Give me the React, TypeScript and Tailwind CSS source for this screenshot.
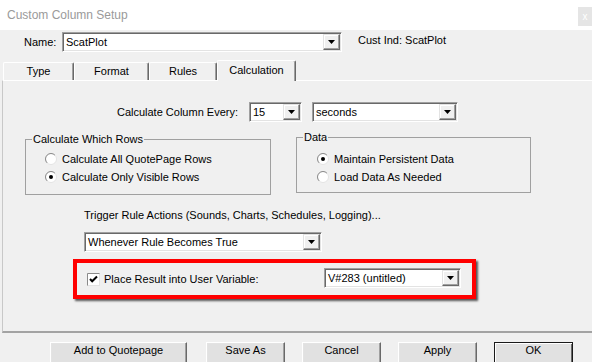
import React from 'react';

const Arrow = () => (
  <svg width="7" height="4" viewBox="0 0 7 4">
    <polygon points="0,0 7,0 3.5,4" fill="#000" />
  </svg>
);

const Combo = ({ value, className }: { value: string; className: string }) => (
  <div
    className={`flex h-[20px] items-stretch bg-white border border-t-[#a0a0a0] border-l-[#a0a0a0] border-r-white border-b-white shadow-[inset_1px_1px_0_#696969,inset_-1px_-1px_0_#e3e3e3] p-[1px] ${className}`}
  >
    <span className="flex-1 pl-[2px] leading-[16px] overflow-hidden whitespace-nowrap">{value}</span>
    <div className="w-[17px] flex items-center justify-center bg-[#f0f0f0] border border-t-[#e3e3e3] border-l-[#e3e3e3] border-r-[#696969] border-b-[#696969] shadow-[inset_-1px_-1px_0_#a0a0a0,inset_1px_1px_0_#fff]">
      <Arrow />
    </div>
  </div>
);

const Radio = ({ checked }: { checked?: boolean }) => (
  <svg width="12" height="12" viewBox="0 0 12 12" className="shrink-0">
    <circle cx="6" cy="6" r="5.5" fill="#fff" stroke="#e3e3e3" />
    <path d="M2.11 9.89 A5.5 5.5 0 0 1 9.89 2.11" fill="none" stroke="#8a8a8a" />
    {checked && <circle cx="6" cy="6" r="2" fill="#000" />}
  </svg>
);

const RadioRow = ({ label, checked, pad }: { label: string; checked?: boolean; pad: string }) => (
  <div className={`flex h-[18px] items-center gap-[5px] ${pad}`}>
    <Radio checked={checked} />
    <span>{label}</span>
  </div>
);

const Tab = ({ label, w, active }: { label: string; w: string; active?: boolean }) => (
  <div
    className={`${w} ${
      active ? 'h-[21px] -mb-[1px] pb-[2px] bg-[#f0f0f0] relative z-10' : 'h-[18px]'
    } flex items-center justify-center border-t border-l border-r border-t-white border-l-white border-r-[#696969] shadow-[inset_-1px_0_0_#a0a0a0] rounded-t-[2px]`}
  >
    {label}
  </div>
);

const Button = ({ label, w, isDefault }: { label: string; w: string; isDefault?: boolean }) => (
  <div
    className={`${w} h-[23px] flex justify-center pt-[1px] leading-[13px] bg-[#e1e1e1] border ${
      isDefault
        ? 'border-[#1a1a1a] shadow-[inset_1px_1px_0_#fff,inset_-1px_-1px_0_#696969]'
        : 'border-t-white border-l-white border-r-[#696969] border-b-[#696969] shadow-[inset_-1px_-1px_0_#a0a0a0,inset_1px_1px_0_#e3e3e3]'
    }`}
  >
    {label}
  </div>
);

export default function App() {
  return (
    <div className="w-[592px] h-[362px] overflow-hidden bg-[#f0f0f0] flex flex-col text-[11px] leading-[13px] text-black font-['Liberation_Sans',Arial,sans-serif]">
      {/* title bar */}
      <div className="h-[30px] shrink-0 bg-white flex justify-between">
        <span className="pl-[7px] pt-[8px] text-[12px] leading-[14px] text-[#9a9a9a]">Custom Column Setup</span>
        <div className="mt-[7px] w-[14px] h-[19px] bg-[#e5e5e5] flex items-center justify-center text-[10px] text-white">x</div>
      </div>

      {/* name row */}
      <div className="h-[30px] shrink-0 flex items-start pt-[2px]">
        <div className="w-[62px] h-[20px] flex items-center pl-[24px]">Name:</div>
        <Combo value="ScatPlot" className="w-[280px]" />
        <div className="h-[20px] flex items-center ml-[16px] -mt-[2px]">Cust Ind: ScatPlot</div>
      </div>

      {/* tabs */}
      <div className="h-[20px] shrink-0 flex items-end pl-[3px]">
        <Tab label="Type" w="w-[71px]" />
        <Tab label="Format" w="w-[75px]" />
        <Tab label="Rules" w="w-[68px]" />
        <Tab label="Calculation" w="w-[79px]" active />
      </div>

      {/* panel */}
      <div className="h-[253px] shrink-0 ml-[2px] w-[600px] border-t border-l border-t-white border-l-[#c8c8c8] border-b-2 border-b-[#a3a3a3] flex flex-col">
        <div className="mt-[21px] h-[20px] flex items-center">
          <div className="w-[235px] text-right">Calculate Column Every:</div>
          <Combo value="15" className="ml-[11px] w-[53px]" />
          <Combo value="seconds" className="ml-[10px] w-[146px]" />
        </div>

        <div className="mt-[15px] flex items-start">
          <div className="mt-[2px] ml-[22px] w-[246px] h-[56px] border border-[#a0a0a0] flex flex-col">
            <span className="-mt-[7px] ml-[6px] px-[1px] self-start bg-[#f0f0f0]">Calculate Which Rows</span>
            <div className="mt-[4px]">
              <RadioRow label="Calculate All QuotePage Rows" pad="pl-[19px]" />
              <RadioRow label="Calculate Only Visible Rows" pad="pl-[19px]" checked />
            </div>
          </div>
          <div className="ml-[25px] w-[235px] h-[56px] border border-[#a0a0a0] flex flex-col">
            <span className="-mt-[7px] ml-[6px] px-[1px] self-start bg-[#f0f0f0]">Data</span>
            <div className="mt-[6px]">
              <RadioRow label="Maintain Persistent Data" pad="pl-[20px]" checked />
              <RadioRow label="Load Data As Needed" pad="pl-[20px]" />
            </div>
          </div>
        </div>

        <div className="mt-[14px] pl-[81px]">Trigger Rule Actions (Sounds, Charts, Schedules, Logging)...</div>

        <Combo value="Whenever Rule Becomes True" className="mt-[10px] ml-[81px] w-[238px]" />

        <div className="mt-[7px] ml-[70px] w-[403px] h-[40px] border-4 border-[#ff0000] shadow-[2px_2px_2px_rgba(0,0,0,0.65)] flex items-center pl-[10px] pr-[11px]">
          <svg width="13" height="13" viewBox="0 0 13 13" className="shrink-0">
            <rect x="0.5" y="0.5" width="12" height="12" fill="#fff" stroke="#e3e3e3" />
            <path d="M0.5 12.5 V0.5 H12.5" fill="none" stroke="#8a8a8a" />
            <polyline points="3,6 5.2,8.3 10,3.5" fill="none" stroke="#000" strokeWidth="2" />
          </svg>
          <span className="ml-[4px]">Place Result into User Variable:</span>
          <Combo value="V#283 (untitled)" className="ml-auto -mt-[2px] w-[137px]" />
        </div>
      </div>

      {/* buttons */}
      <div className="mt-[9px] flex pl-[50px]">
        <Button label="Add to Quotepage" w="w-[137px]" />
        <div className="ml-[19px]">
          <Button label="Save As" w="w-[79px]" />
        </div>
        <div className="ml-[17px]">
          <Button label="Cancel" w="w-[79px]" />
        </div>
        <div className="ml-[17px]">
          <Button label="Apply" w="w-[79px]" />
        </div>
        <div className="ml-[17px]">
          <Button label="OK" w="w-[79px]" isDefault />
        </div>
      </div>
    </div>
  );
}
